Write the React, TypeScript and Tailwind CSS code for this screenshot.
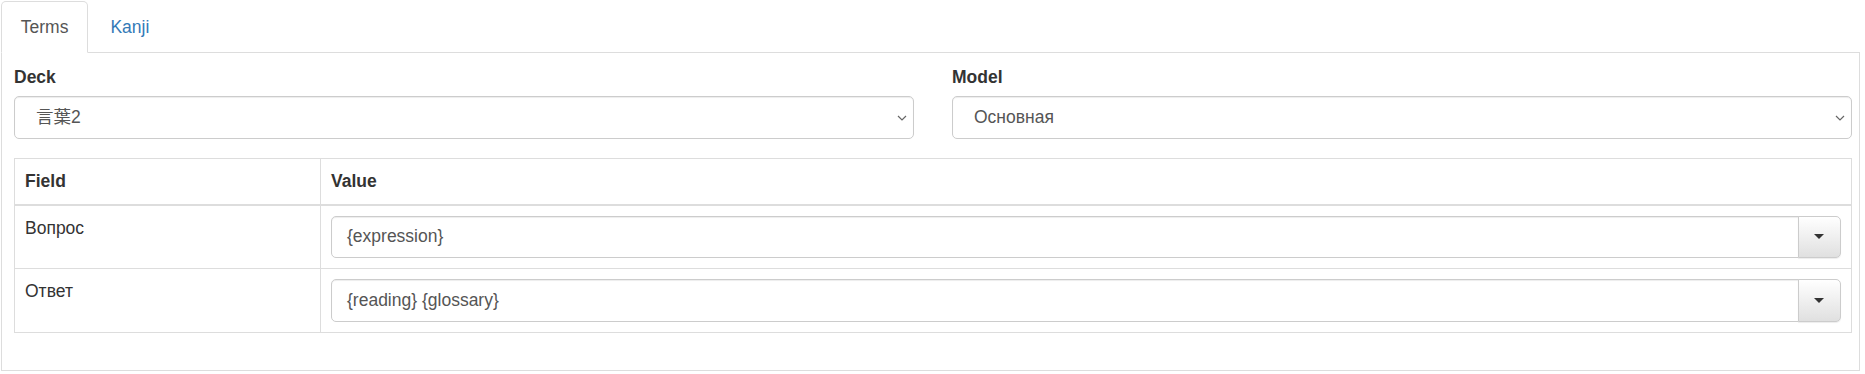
import React from "react";

function Chevron() {
  return (
    <svg width="10" height="6" viewBox="0 0 10 6" className="shrink-0">
      <path d="M1 1 L5 5 L9 1" fill="none" stroke="#666" strokeWidth="1.2" />
    </svg>
  );
}

function SelectBox({ value }: { value: string }) {
  return (
    <div className="flex h-[42.5px] items-center justify-between rounded-[5px] border border-[#ccc] bg-white pl-[21px] pr-[6px] text-[#555] shadow-[inset_0_1px_1px_rgba(0,0,0,0.075)]">
      <span>{value}</span>
      <Chevron />
    </div>
  );
}

function InputGroup({ value }: { value: string }) {
  return (
    <div className="flex h-[42.5px]">
      <div className="flex flex-1 items-center rounded-l-[5px] border border-[#ccc] bg-white px-[15px] text-[#555] shadow-[inset_0_1px_1px_rgba(0,0,0,0.075)]">
        {value}
      </div>
      <div className="-ml-px flex w-[43px] items-center justify-center rounded-r-[5px] border border-[#ccc] bg-gradient-to-b from-white to-[#e0e0e0] shadow-[0_1px_1px_rgba(0,0,0,0.075)]">
        <span className="h-0 w-0 border-x-[5px] border-t-[5px] border-x-transparent border-t-[#333]" />
      </div>
    </div>
  );
}

export default function App() {
  return (
    <div className="h-[374px] w-[1865px] overflow-hidden bg-white pt-px font-['Liberation_Sans',Arial,'Noto_Sans_CJK_JP',sans-serif] text-[17.5px] leading-[25px] text-[#333]">
      <div className="ml-px w-[1859px]">
        <div className="flex border-b border-[#ddd]">
          <div className="-mb-px rounded-t-[5px] border border-[#ddd] border-b-transparent bg-white px-[18.75px] py-[12.5px] text-[#555]">
            Terms
          </div>
          <div className="-mb-px ml-[2.5px] border border-transparent px-[18.75px] py-[12.5px] text-[#337ab7]">
            Kanji
          </div>
        </div>
        <div className="border-x border-b border-[#ddd] pb-[12px] pl-[12px] pr-[7.5px] pt-[12px]">
          <div className="mb-[18.75px] grid grid-cols-2 gap-x-[38.5px]">
            <div>
              <div className="mb-[6.25px] font-bold">Deck</div>
              <SelectBox value="言葉2" />
            </div>
            <div>
              <div className="mb-[6.25px] font-bold">Model</div>
              <SelectBox value="Основная" />
            </div>
          </div>
          <table className="mb-[25px] w-full table-fixed border-collapse border border-[#ddd]">
            <thead>
              <tr>
                <th className="w-[306px] border border-b-2 border-[#ddd] p-[10px] text-left font-bold">
                  Field
                </th>
                <th className="border border-b-2 border-[#ddd] p-[10px] text-left font-bold">
                  Value
                </th>
              </tr>
            </thead>
            <tbody>
              <tr>
                <td className="border border-[#ddd] p-[10px] align-top">Вопрос</td>
                <td className="border border-[#ddd] p-[10px] align-top">
                  <InputGroup value="{expression}" />
                </td>
              </tr>
              <tr>
                <td className="border border-[#ddd] p-[10px] align-top">Ответ</td>
                <td className="border border-[#ddd] p-[10px] align-top">
                  <InputGroup value="{reading} {glossary}" />
                </td>
              </tr>
            </tbody>
          </table>
        </div>
      </div>
    </div>
  );
}
